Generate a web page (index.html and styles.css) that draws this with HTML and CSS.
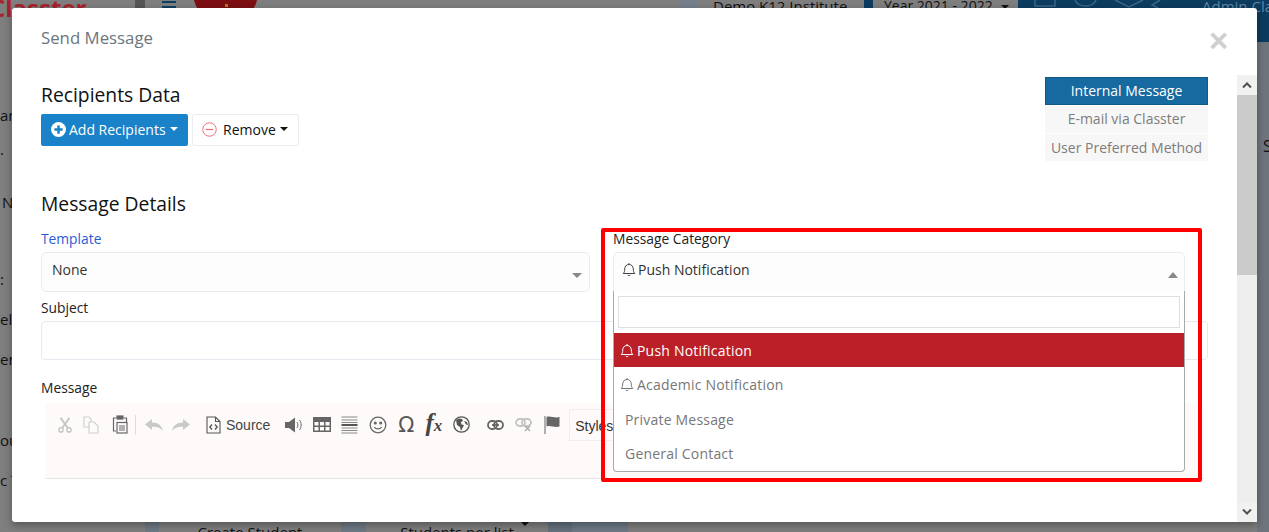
FILE: index.html
```html
<!DOCTYPE html>
<html lang="en">
<head>
<meta charset="utf-8">
<title>Send Message</title>
<link rel="stylesheet" href="styles.css">
</head>
<body>
<div class="page">
  <header class="topbar">
    <div class="brand">Classter</div>
    <div class="rail"></div>
    <div class="burger"><span></span><span></span><span></span></div>
    <div class="avatar"></div>
    <div class="inst">Demo K12 Institute</div>
    <div class="year">Year 2021 - 2022 <i class="caret yearCaret"></i></div>
    <div class="navblue">
      <svg width="150" height="8" viewBox="0 0 150 8" fill="none" stroke="#3c6584" stroke-width="1.500"><path d="M17 0v6h20V0M57 0c2 5 8 6 11 6s8-1 10-6M97 0l14 7 14-7M142 0l-8 5 6 3"/></svg>
      <span class="admin">Admin Cla</span>
    </div>
  </header>
  <aside class="sideText">
    <span class="s1">ar</span><span class="s2">.</span><span class="s3">N</span><span class="s4">:</span><span class="s5">el</span><span class="s6">en</span><span class="s7">ou</span><span class="s8">c T</span>
  </aside>
  <div class="bottomTabs">
    <span class="b0"></span><span class="bb b1"></span>
    <span class="tab">Create Student</span>
    <span class="bb b2"></span>
    <span class="tab">Students per list<i class="caret tabCaret"></i></span>
    <span class="bb b3"></span>
    <span class="bb b4"></span>
  </div>
  <div class="rightEdge"><span class="edgeS">S</span></div>
</div>

<div class="modal">
  <div class="modalHead">
    <h5>Send Message</h5>
    <span class="close">×</span>
  </div>
  <div class="scroller">
    <div class="body">
      <div class="topRow">
        <div>
          <h4 class="h1st">Recipients Data</h4>
          <div class="btnRow">
            <button class="btn primary">
              <svg width="15" height="15" viewBox="0 0 16 16"><circle cx="8" cy="8" r="8" fill="#fff"/><path d="M8 3.600v8.800M3.600 8h8.800" stroke="#1a82c8" stroke-width="2.600"/></svg>
              Add Recipients <i class="caret white"></i>
            </button>
            <button class="btn plain">
              <svg width="15" height="15" viewBox="0 0 16 16" fill="none"><circle cx="8" cy="8" r="7.200" stroke="#ef6a72" stroke-width="1"/><path d="M4 8h8" stroke="#ef6a72" stroke-width="1.300"/></svg>
              <span class="rm">Remove</span> <i class="caret dark"></i>
            </button>
          </div>
        </div>
        <div class="methods">
          <div class="method on">Internal Message</div>
          <div class="method">E-mail via Classter</div>
          <div class="method last">User Preferred Method</div>
        </div>
      </div>

      <h4 class="h2nd">Message Details</h4>

      <div class="cols">
        <div class="colL">
          <label class="lab blue">Template</label>
          <div class="select"><span>None</span><i class="arrow down"></i></div>
        </div>
        <div class="colR">
          <label class="lab">Message Category</label>
          <div class="select open">
            <span class="bellText">
              <svg class="bell" width="14" height="15" viewBox="0 0 14 15" fill="none"><path d="M1.200 11.500c1-1 1.500-2 1.500-4.500 0-2.600 1.800-4.500 4.300-4.500s4.300 1.900 4.300 4.500c0 2.500.5 3.500 1.500 4.500z" stroke="#444" stroke-width="1"/><path d="M5.700 12.800a1.400 1.400 0 0 0 2.600 0" stroke="#444"/><path d="M7 1v1.500" stroke="#444"/></svg>
              Push Notification</span>
            <i class="arrow up"></i>
          </div>
        </div>
      </div>

      <label class="lab subj">Subject</label>
      <div class="input"></div>

      <label class="lab msg">Message</label>
      <div class="editor">
        <div class="tools">
          <svg class="ti" width="16" height="18" viewBox="0 0 18 18" fill="none" stroke="#c4c4c4" stroke-width="2"><path d="M4 1l8 11M14 1L6 12"/><circle cx="4.500" cy="14.500" r="2.400" stroke-width="1.500"/><circle cx="13.500" cy="14.500" r="2.400" stroke-width="1.500"/></svg>
          <svg class="ti m1" width="16" height="18" viewBox="0 0 16 18" fill="none" stroke="#cfcfcf" stroke-width="1.200"><path d="M1 1h5l2 2v8H1z"/><path d="M6 6h5l4 4v7H6z" fill="#fffafa"/></svg>
          <svg class="ti m4" width="16" height="19" viewBox="0 0 16 19" fill="none" stroke="#666" stroke-width="1.200"><path d="M4 3H1.500v13H4"/><path d="M12 3h2.500v4"/><rect x="5" y="1" width="6" height="3" fill="#666"/><rect x="5" y="7.500" width="10" height="10.500"/><path d="M7 11h6M7 13h6M7 15h6"/></svg>
          <span class="sep"></span>
          <svg class="ti" width="18" height="14" viewBox="0 0 18 14"><path d="M0 6.500L7 1v3.500c6 0 10 3 11 8.500-2.500-3.500-6-4.500-11-4.300V12z" fill="#c9c9c9"/></svg>
          <svg class="ti" width="18" height="14" viewBox="0 0 18 14"><path d="M18 6.500L11 1v3.500C5 4.500 1 7.500 0 13c2.500-3.500 6-4.500 11-4.300V12z" fill="#c9c9c9"/></svg>
          <span class="source">
            <svg width="15" height="18" viewBox="0 0 15 18" fill="none" stroke="#555" stroke-width="1.100"><path d="M1 1h8.500L14 5.500V17H1z"/><path d="M9.500 1v4.500H14"/><path d="M6 8.500L3.800 11 6 13.500M9 8.500l2.200 2.500L9 13.500" stroke-width="1.300"/></svg>
            Source
          </span>
          <svg class="ti m6" width="18" height="16" viewBox="0 0 18 16"><path d="M0 5h4l6-4.500v15L4 11H0z" fill="#666"/><path d="M12 5c1.200 1.800 1.200 4.200 0 6M14.500 3c2.200 3 2.200 7 0 10" stroke="#666" fill="none"/></svg>
          <svg class="ti m1" width="18" height="15" viewBox="0 0 18 15"><rect width="18" height="15" fill="#666"/><path d="M1.500 5h4v3.500h-4zM7 5h4v3.500H7zM12.500 5h4v3.500h-4zM1.500 10h4v3.500h-4zM7 10h4v3.500H7zM12.500 10h4v3.500h-4z" fill="#fffafa"/></svg>
          <svg class="ti m1" width="17" height="18" viewBox="0 0 16 18"><path d="M0 1h16M0 4h16M0 6.500h16" stroke="#888"/><path d="M0 9h16" stroke="#555" stroke-width="2"/><path d="M0 12h16M0 14.500h16M0 17h16" stroke="#888"/></svg>
          <svg class="ti m2" width="18" height="18" viewBox="0 0 18 18" fill="none" stroke="#666" stroke-width="1.300"><circle cx="9" cy="9" r="7.800"/><circle cx="6.300" cy="7" r=".9" fill="#666"/><circle cx="11.700" cy="7" r=".9" fill="#666"/><path d="M5.300 11c1.700 2.600 5.700 2.600 7.400 0"/></svg>
          <span class="glyph omega m2">Ω</span>
          <span class="glyph fx m2">f<small>x</small></span>
          <svg class="ti m2" width="17" height="17" viewBox="0 0 17 17"><circle cx="8.500" cy="8.500" r="7.700" fill="none" stroke="#555" stroke-width="1.300"/><path d="M3 4l3-1.500 3 .5 1 2-2 1 .5 2.500 2.500.5L9 13l-1 2-1-4-3-2zM11 5l3 1 1 3-2-.5z" fill="#555"/></svg>
          <svg class="ti m8" width="17" height="10" viewBox="0 0 17 10" fill="none" stroke="#666" stroke-width="1.800"><rect x="1" y="1" width="9" height="8" rx="4"/><rect x="7" y="1" width="9" height="8" rx="4"/><path d="M5 5h7"/></svg>
          <svg class="ti m2" width="17" height="14" viewBox="0 0 17 14" fill="none" stroke="#c4c4c4" stroke-width="1.800"><rect x="1" y="1" width="9" height="7" rx="3.500"/><rect x="7" y="1" width="9" height="7" rx="3.500"/><path d="M10 8l5 5M15 8l-5 5" stroke="#aaa" stroke-width="1.400"/></svg>
          <svg class="ti m3" width="16" height="18" viewBox="0 0 16 18"><path d="M1 0v18" stroke="#888" stroke-width="1.300"/><path d="M2.500 1c4-1.500 8 1.500 13 0v9.500c-5 1.500-9-1.500-13 0z" fill="#666"/></svg>
          <span class="styles">Styles</span>
        </div>
      </div>
    </div>
    <div class="scrollbar">
      <span class="sbBtn"><svg width="10" height="6" viewBox="0 0 10 6" fill="none" stroke="#505050" stroke-width="2"><path d="M1 5.500l4-4 4 4"/></svg></span>
      <span class="thumb"></span>
      <span class="sbFill"></span>
      <span class="sbBtn"><svg width="10" height="6" viewBox="0 0 10 6" fill="none" stroke="#505050" stroke-width="2"><path d="M1 .5l4 4 4-4"/></svg></span>
    </div>
  </div>

  <div class="dropdown">
    <div class="search"></div>
    <ul class="opts">
      <li class="active"><svg width="14" height="15" viewBox="0 0 14 15" fill="none" stroke="#fff"><path d="M1.200 11.500c1-1 1.500-2 1.500-4.500 0-2.600 1.800-4.500 4.300-4.500s4.300 1.900 4.300 4.500c0 2.500.5 3.500 1.500 4.500z"/><path d="M5.700 12.800a1.400 1.400 0 0 0 2.600 0M7 1v1.500"/></svg>Push Notification</li>
      <li><svg width="14" height="15" viewBox="0 0 14 15" fill="none" stroke="#777"><path d="M1.200 11.500c1-1 1.500-2 1.500-4.500 0-2.600 1.800-4.500 4.300-4.500s4.300 1.900 4.300 4.500c0 2.500.5 3.500 1.500 4.500z"/><path d="M5.700 12.800a1.400 1.400 0 0 0 2.600 0M7 1v1.500"/></svg>Academic Notification</li>
      <li class="pad">Private Message</li>
      <li class="pad">General Contact</li>
    </ul>
  </div>
  <div class="redbox"></div>
</div>
</body>
</html>
```
FILE: styles.css
```css
* { box-sizing: border-box; }
html, body { margin: 0; height: 100%; }
body { width: 1269px; height: 532px; overflow: hidden; position: relative; background: #6c7379; font-family: "Open Sans", sans-serif; color: #212529; }

.page { position: absolute; inset: 0; overflow: hidden; background: #7f7f7f; }
.topbar { display: flex; height: 42px; align-items: flex-start; background: #7f7f7f; }
.topbar > * { flex: none; }
.brand { width: 135px; height: 32px; margin-top: -8px; color: #a8232b; font-weight: 700; font-size: 24px; line-height: 32px; text-indent: -10px; white-space: nowrap; overflow: hidden; }
.rail { width: 10px; height: 42px; background: #565656; }
.burger { width: 48px; padding: 1px 0 0 17px; }
.burger span { display: block; width: 14px; height: 2px; margin-bottom: 3px; background: #0d3f66; }
.avatar { position: relative; width: 65px; height: 66px; margin-top: -41px; border-radius: 50%; background: #7d0e12; }
.avatar::after { content: ""; position: absolute; left: 32px; top: 45px; width: 3px; height: 3px; background: #b8791a; }
.inst { margin-left: 440px; width: 166px; padding-left: 15px; height: 42px; margin-top: -2px; background: #7f7f7f; font-size: 15px; line-height: 16px; color: #111; white-space: nowrap; box-shadow: -18px 0 0 #76808c; }
.year { width: 154px; padding-left: 11px; height: 42px; margin-top: -2px; background: #7f7f7f; font-size: 14px; line-height: 16px; color: #111; white-space: nowrap; border-left: 9px solid #0c3c60; }
.yearCaret { margin-left: 5px; }
.navblue { width: 251px; height: 42px; background: #0c3c60; display: flex; align-items: flex-start; }
.navblue svg { flex: none; }
.admin { margin-left: 34px; margin-top: -2px; font-size: 15px; line-height: 16px; color: #5f86a5; white-space: nowrap; }
.caret { display: inline-block; border-left: 4.500px solid transparent; border-right: 4.500px solid transparent; border-top: 4.500px solid #111; vertical-align: 2px; }

.sideText span { position: absolute; left: 0; font-size: 15px; color: #111; }
.sideText .s3 { left: 2px; }
.s1 { top: 105px; } .s2 { top: 139px; } .s3 { top: 192px; } .s4 { top: 269px; } .s5 { top: 309px; } .s6 { top: 349px; } .s7 { top: 430px; } .s8 { top: 470px; }
.bottomTabs { position: absolute; left: 0; right: 0; top: 520px; height: 12px; overflow: hidden; display: flex; font-size: 15px; line-height: 24px; color: #111; }
.b0 { width: 145px; }
.bb { background: #6e7a85; }
.b1 { width: 14px; }
.b2 { width: 25px; }
.b3 { width: 24px; background: #66727e; }
.b4 { width: 56px; }
.tab { position: relative; width: 182px; text-align: center; background: #7f7f7f; }
.tabCaret { position: absolute; left: 155px; top: 2px; }
.rightEdge { position: absolute; left: 1257px; top: 42px; width: 12px; height: 490px; background: #6e757c; }
.edgeS { position: absolute; left: 6px; top: 93px; font-size: 16px; color: #111; }

.modal { position: absolute; left: 12px; top: 8px; width: 1245px; height: 514px; background: #fff; border-radius: 3px; box-shadow: 0 3px 9px rgba(0,0,0,.35); }
.modalHead { height: 67px; position: relative; padding: 19px 0 0 29px; }
.modalHead h5 { margin: 0; font-size: 16.800px; line-height: 22px; font-weight: 400; color: #6c757d; }
.close { position: absolute; left: 1197px; top: 16px; font-size: 33px; line-height: 34px; color: #cfcfcf; font-weight: 700; font-family: "Liberation Sans", sans-serif; }

.scroller { display: flex; height: 447px; }
.body { width: 1225px; padding: 2px 29px 0 29px; }
.scrollbar { width: 20px; display: flex; flex-direction: column; background: #f1f1f1; }
.sbBtn { height: 20px; flex: none; display: flex; align-items: center; justify-content: center; background: #f1f1f1; }
.thumb { height: 180px; flex: none; background: #cbcbcb; }
.sbFill { flex: 1; background: #eee; }

.topRow { display: flex; justify-content: space-between; align-items: flex-start; height: 85px; }
.h1st, .h2nd { margin: 0; font-size: 19.300px; line-height: 26px; font-weight: 400; color: #111; }
.h1st { margin-top: 4px; padding-top: 1px; }
.h2nd { margin-top: 29px; }
.btnRow { display: flex; gap: 4px; margin-top: 6px; }
.btn { display: flex; align-items: center; height: 32px; font-family: inherit; font-size: 14px; border-radius: 2px; padding: 0 0 2px; cursor: pointer; }
.primary { width: 147px; gap: 3px; padding-left: 10px; background: #1a82c8; color: #fff; border: 0; }
.plain { width: 107px; gap: 3px; padding-left: 9px; background: #fff; color: #111; border: 1px solid #ececec; }
.rm { margin-left: 3px; }
.white { border-top-color: #fff; margin-left: 1px; }
.dark { margin-left: 1px; }
.methods { width: 163px; display: flex; flex-direction: column; gap: 1px; font-size: 14px; }
.method { height: 27px; padding-bottom: 2px; background: #f7f7f7; color: #7d7d7d; display: flex; align-items: center; justify-content: center; white-space: nowrap; }
.method.last { padding-bottom: 0; }
.method.on { height: 28px; background: #166a9f; color: #fff; border: 1px solid #115a88; }

.cols { display: flex; gap: 23px; margin-top: 13px; }
.colL { width: 549px; }
.colR { width: 572px; }
.lab { display: block; font-size: 13.800px; line-height: 18px; color: #222; }
.lab.blue { color: #2a5bd7; }
.select { margin-top: 4px; height: 40px; display: flex; align-items: center; justify-content: space-between; padding: 0 7px 6px 10px; border: 1px solid #e9ecef; border-radius: 5px; background: #fdfdfd; font-size: 14px; color: #333; }
.select.open { border-bottom-left-radius: 0; border-bottom-right-radius: 0; padding-left: 8px; padding-right: 6px; }
.bellText { display: flex; align-items: center; gap: 2px; }
.arrow { border-left: 5px solid transparent; border-right: 5px solid transparent; }
.arrow.down { border-top: 5px solid #888; margin-top: 12px; }
.arrow.up { border-bottom: 6px solid #888; margin-top: 12px; }
.subj { margin-top: 7px; }
.input { height: 39px; margin-top: 4px; border: 1px solid #e6e9f0; border-radius: 4px; background: #fff; }
.msg { margin-top: 19px; }
.editor { margin: 6px 0 0 4px; height: 76px; width: 1159px; background: #fffafa; border-bottom: 1px solid #e6e6e6; }
.tools { display: flex; align-items: center; gap: 9px; height: 43px; padding-left: 12px; overflow: hidden; }
.ti { flex: none; }
.m1 { margin-left: 1px; }
.m2 { margin-left: 2px; }
.m3 { margin-left: 3px; }
.m4 { margin-left: 4px; }
.m6 { margin-left: 6px; }
.m8 { margin-left: 8px; }
.sep { flex: none; width: 1px; height: 20px; background: #ddd; margin: 0 0 0 -2px; }
.source { flex: none; display: flex; align-items: center; gap: 5px; margin-left: 7px; font-family: "Liberation Sans", sans-serif; font-size: 14px; color: #444; }
.glyph { flex: none; color: #555; font-family: "DejaVu Sans", sans-serif; font-size: 21px; line-height: 20px; }
.fx { font-family: "Liberation Serif", serif; font-style: italic; font-weight: 700; font-size: 25px; color: #444; }
.fx small { font-size: 17px; }
.styles { flex: none; height: 32px; padding: 0 5px; width: 120px; line-height: 32px; border: 1px solid #f0eeee; font-family: "Liberation Sans", sans-serif; font-size: 14px; color: #333; }

.dropdown { position: absolute; left: 601px; top: 283px; width: 572px; height: 181px; background: #fff; border: 1px solid #aaa; border-top: 0; border-radius: 0 0 4px 4px; overflow: hidden; }
.search { height: 32px; margin: 5px 4px 5px 4px; border: 1px solid #e0e0e0; }
.opts { list-style: none; margin: 0; padding: 0; font-size: 14px; color: #777; }
.opts li { height: 34.500px; display: flex; align-items: center; gap: 3px; padding-left: 6px; letter-spacing: .2px; }
.opts .active { height: 34px; margin-bottom: .5px; background: #bb2029; color: #fff; }
.opts .pad { padding-left: 11px; }
.redbox { position: absolute; left: 589px; top: 220px; width: 601px; height: 254px; border: 4px solid #f00; border-radius: 2px; pointer-events: none; }
```
